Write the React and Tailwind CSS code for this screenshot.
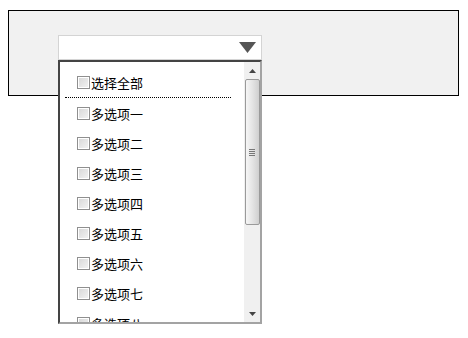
import React from "react";

const options = ["多选项一", "多选项二", "多选项三", "多选项四", "多选项五", "多选项六", "多选项七", "多选项八"];

function Box({ label }) {
  return (
    <div className="flex items-center h-[30px] pl-[17px] shrink-0">
      <span className="w-[13px] h-[13px] border border-[#8f8f8f] bg-gradient-to-br from-[#d6d6d6] to-[#f4f4f4] shadow-[inset_0_0_0_1px_#fff]" />
      <span className="ml-[1px] text-[13px] leading-none text-black">{label}</span>
    </div>
  );
}

export default function App() {
  return (
    <div className="relative w-[468px] h-[338px] bg-white pt-[10px] pl-[8px]" style={{ fontFamily: '"Noto Sans CJK SC", "Noto Sans", sans-serif' }}>
      <div className="w-[451px] h-[86px] border border-black bg-[#f1f1f1] pt-[24px] pl-[49px]">
        <div className="relative w-[204px] h-[25px] bg-white border border-[#d4d4d4] flex items-center justify-end pr-[5px]">
          <svg width="17" height="11" viewBox="0 0 17 11">
            <path d="M0 0 H17 L8.5 11 Z" fill="#555" />
          </svg>
          <div className="absolute left-[-1px] top-[24px] w-[204px] h-[264px] flex border-t-2 border-l-2 border-t-[#444] border-l-[#444] border-r-2 border-b-2 border-r-[#a3a3a3] border-b-[#a3a3a3] bg-white z-10">
            <div className="flex-1 overflow-hidden flex flex-col pt-[6px]">
              <div className="flex items-center h-[29px] pl-[17px] shrink-0">
                <span className="w-[13px] h-[13px] border border-[#8f8f8f] bg-gradient-to-br from-[#d6d6d6] to-[#f4f4f4] shadow-[inset_0_0_0_1px_#fff]" />
                <span className="ml-[1px] text-[13px] leading-none text-black">选择全部</span>
              </div>
              <div className="ml-[5px] w-[166px] border-t border-dotted border-black shrink-0" />
              {options.map((o) => (
                <Box key={o} label={o} />
              ))}
            </div>
            <div className="w-[16px] bg-[#f0f0f0] flex flex-col items-center shrink-0">
              <div className="h-[17px] flex items-center justify-center">
                <svg width="7" height="4" viewBox="0 0 7 4"><path d="M3.5 0 L7 4 H0 Z" fill="#444" /></svg>
              </div>
              <div className="w-[15px] h-[146px] rounded-[2px] border border-[#9a9a9a] bg-gradient-to-r from-[#f6f6f6] via-[#e4e4e4] to-[#cfcfcf] flex items-center justify-center">
                <div className="flex flex-col gap-[1px]">
                  <div className="w-[6px] h-[1px] bg-[#777]" />
                  <div className="w-[6px] h-[1px] bg-[#777]" />
                  <div className="w-[6px] h-[1px] bg-[#777]" />
                  <div className="w-[6px] h-[1px] bg-[#777]" />
                </div>
              </div>
              <div className="flex-1" />
              <div className="h-[17px] flex items-center justify-center">
                <svg width="7" height="4" viewBox="0 0 7 4"><path d="M0 0 H7 L3.5 4 Z" fill="#444" /></svg>
              </div>
            </div>
          </div>
        </div>
      </div>
    </div>
  );
}
